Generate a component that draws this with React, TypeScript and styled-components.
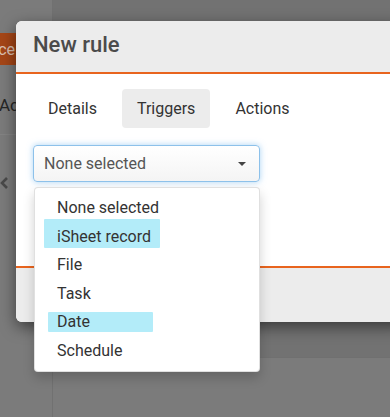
import React from "react";
import styled, { createGlobalStyle } from "styled-components";

const Global = createGlobalStyle`
  html, body { margin: 0; padding: 0; }
  body { font-family: Roboto, "Liberation Sans", sans-serif; background: #7b7b7b; }
  #root { width: 390px; height: 417px; overflow: hidden; }
`;

const Page = styled.div`
  position: relative;
  width: 390px;
  height: 417px;
  overflow: hidden;
  background: #7b7b7b;
  display: grid;
  grid-template-columns: 53px 1fr;
`;

const Sidebar = styled.aside`
  border-right: 1px solid #717171;
  display: flex;
  flex-direction: column;
  padding-top: 33px;
`;

const BrandButton = styled.div`
  height: 32px;
  background: #a54617;
  display: flex;
  align-items: center;
  overflow: hidden;
  white-space: nowrap;
  color: #dcc0b0;
  font-size: 16px;
`;

const BrandText = styled.span`
  width: 15px;
  display: flex;
  justify-content: flex-end;
  overflow: hidden;
`;

const SideItem = styled.div`
  height: 70px;
  display: flex;
  align-items: center;
  margin-left: -1px;
  font-size: 17px;
  color: #262626;
  border-bottom: 1px solid #838383;
  padding-top: 10px;
  box-sizing: border-box;
`;

const Collapse = styled.div`
  height: 96px;
  display: flex;
  align-items: center;
`;

const Main = styled.main`
  display: flex;
  flex-direction: column;
`;

const MainHeader = styled.div`
  height: 358px;
  background: #727272;
  border-bottom: 1px solid #707070;
  box-sizing: border-box;
`;

const Modal = styled.div`
  position: absolute;
  left: 16px;
  top: 21px;
  width: 390px;
  background: #fff;
  border-radius: 6px;
  box-shadow: 0 5px 15px rgba(0, 0, 0, 0.5);
  display: flex;
  flex-direction: column;
`;

const Header = styled.header`
  background: #ececec;
  border-bottom: 2px solid #e8641e;
  border-radius: 6px 0 0 0;
  display: flex;
  align-items: center;
  padding: 0 17px 4px;
  height: 47px;
`;

const Title = styled.h4`
  margin: 0;
  font-size: 22px;
  font-weight: 500;
  color: #4b4b4b;
`;

const Body = styled.div`
  padding: 15px 17px 0;
  height: 192px;
  box-sizing: border-box;
  display: flex;
  flex-direction: column;
  gap: 17px;
`;

const Tabs = styled.nav`
  display: flex;
  gap: 10px;
`;

const Tab = styled.div<{ $active?: boolean }>`
  padding: 10px 15px;
  line-height: 19px;
  font-size: 16px;
  color: #333;
  border-radius: 4px;
  background: ${(p) => (p.$active ? "#ececec" : "transparent")};
`;

const SelectWrap = styled.div`
  position: relative;
  width: 227px;
`;

const SelectButton = styled.div`
  height: 37px;
  box-sizing: border-box;
  border: 1px solid #8dc1ea;
  border-radius: 4px;
  background: linear-gradient(#ffffff, #f4f4f4);
  box-shadow: 0 0 6px rgba(102, 175, 233, 0.55);
  display: flex;
  align-items: center;
  justify-content: space-between;
  padding: 0 13px 0 10px;
  font-size: 16px;
  color: #555;
`;

const Caret = styled.span`
  width: 0;
  height: 0;
  border-left: 4.5px solid transparent;
  border-right: 4.5px solid transparent;
  border-top: 4.5px solid #444;
`;

const Menu = styled.ul`
  position: absolute;
  top: calc(100% + 5px);
  left: 1px;
  width: 226px;
  box-sizing: border-box;
  margin: 0;
  padding: 6px 0 6px;
  list-style: none;
  background: #fff;
  border: 1px solid rgba(0, 0, 0, 0.12);
  border-radius: 4px;
  box-shadow: 0 6px 12px rgba(0, 0, 0, 0.18);
  z-index: 2;
`;

const Option = styled.li`
  position: relative;
  height: 28.5px;
  line-height: 28.5px;
  padding-left: 22px;
  font-size: 16px;
  color: #333;
`;

const Mark = styled.span<{ $l: number; $t: number; $w: number; $h: number }>`
  position: absolute;
  left: ${(p) => p.$l}px;
  top: ${(p) => p.$t}px;
  width: ${(p) => p.$w}px;
  height: ${(p) => p.$h}px;
  background: #b3ecf9;
  border-radius: 1px;
`;

const OptionText = styled.span`
  position: relative;
`;

const Footer = styled.footer`
  height: 54px;
  background: #ececec;
  border-top: 2px solid #e8641e;
  border-radius: 0 0 0 6px;
`;

type Opt = { label: string; mark?: { l: number; t: number; w: number; h: number } };

const options: Opt[] = [
  { label: "None selected" },
  { label: "iSheet record", mark: { l: 9, t: -3.5, w: 116, h: 29 } },
  { label: "File" },
  { label: "Task" },
  { label: "Date", mark: { l: 13, t: 4, w: 105, h: 20 } },
  { label: "Schedule" },
];

export default function App() {
  return (
    <>
      <Global />
      <Page>
        <Sidebar>
          <BrandButton>
            <BrandText>Workspace</BrandText>
          </BrandButton>
          <SideItem>Actions</SideItem>
          <Collapse>
            <svg width="9" height="14" viewBox="0 0 9 14">
              <path d="M7 2 L2 7 L7 12" fill="none" stroke="#4a4a4a" strokeWidth="2.6" />
            </svg>
          </Collapse>
        </Sidebar>
        <Main>
          <MainHeader />
        </Main>
        <Modal>
          <Header>
            <Title>New rule</Title>
          </Header>
          <Body>
            <Tabs>
              <Tab>Details</Tab>
              <Tab $active>Triggers</Tab>
              <Tab>Actions</Tab>
            </Tabs>
            <SelectWrap>
              <SelectButton>
                <span>None selected</span>
                <Caret />
              </SelectButton>
              <Menu>
                {options.map((o) => (
                  <Option key={o.label}>
                    {o.mark && <Mark $l={o.mark.l} $t={o.mark.t} $w={o.mark.w} $h={o.mark.h} />}
                    <OptionText>{o.label}</OptionText>
                  </Option>
                ))}
              </Menu>
            </SelectWrap>
          </Body>
          <Footer />
        </Modal>
      </Page>
    </>
  );
}
